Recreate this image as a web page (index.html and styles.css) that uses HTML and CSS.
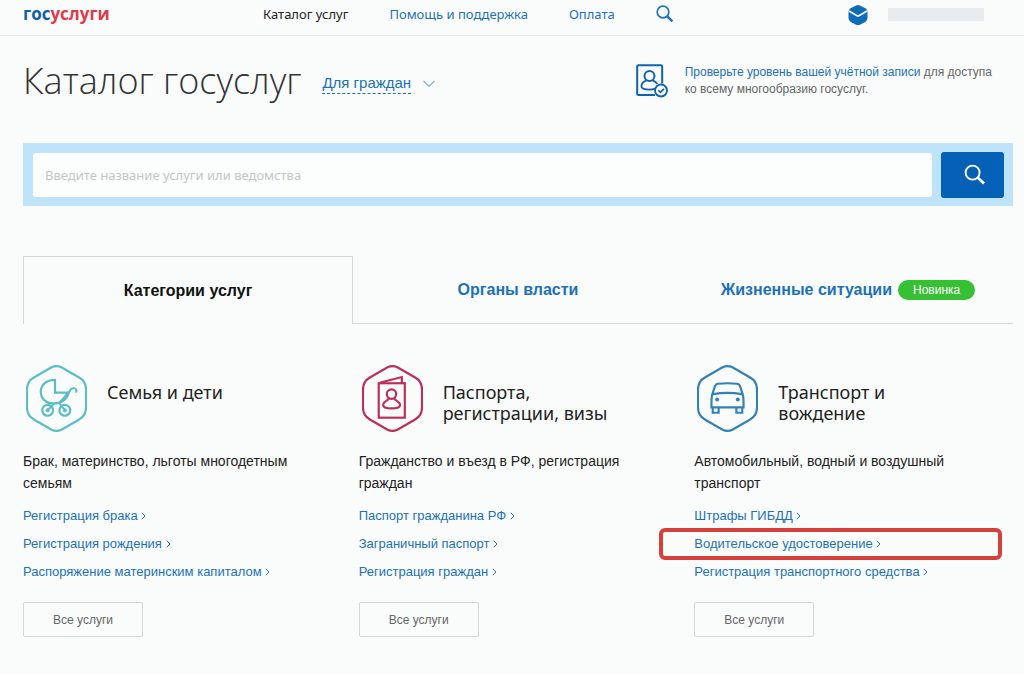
FILE: index.html
```
<!DOCTYPE html>
<html lang="ru">
<head>
<meta charset="utf-8">
<meta name="viewport" content="width=device-width, initial-scale=1">
<title>Каталог госуслуг</title>
<link rel="stylesheet" href="styles.css">
</head>
<body>
<header class="topbar">
  <a class="logo" href="#"><span class="logo-blue">гос</span>услуги</a>
  <nav class="nav">
    <a class="nav-link current" href="#">Каталог услуг</a>
    <a class="nav-link" href="#">Помощь и поддержка</a>
    <a class="nav-link" href="#">Оплата</a>
    <button class="icon-button" type="button" aria-label="Поиск">
      <svg width="18" height="18" viewBox="0 0 18 18" fill="none" stroke="#1c71b8"><circle cx="7" cy="7" r="5.8" stroke-width="1.7"/><path d="M11.3 11.3L16.4 16.4" stroke-width="2.4"/></svg>
    </button>
  </nav>
  <div class="account">
    <a href="#" class="mail" aria-label="Сообщения">
      <svg width="20" height="20" viewBox="0 0 20 20"><path d="M7.6 .7Q10-.5 12.4.7L17.3 3.2Q19.5 4.5 19.5 7V13Q19.5 15.5 17.3 16.9L12.4 19.4Q10 20.5 7.6 19.4L2.7 16.9Q.5 15.5.5 13V7Q.5 4.5 2.7 3.2Z" fill="#0f6cb8"/><path d="M1 6L8.6 10.5Q10 11.3 11.4 10.5L19 6" fill="none" stroke="#fafcfb" stroke-width="1.6"/></svg>
    </a>
    <span class="user-name"></span>
  </div>
</header>

<main class="page">
  <section class="heading">
    <h1 class="title">Каталог госуслуг</h1>
    <button class="audience" type="button">
      <span class="audience-text">Для граждан</span>
      <svg width="12" height="8" viewBox="0 0 12 8" fill="none" stroke="#7fb0d6" stroke-width="1.2"><path d="M.6 1L6 6.4L11.4 1"/></svg>
    </button>
    <div class="level">
      <svg width="32" height="34" viewBox="0 0 32 34" fill="none" stroke="#0f62ae" stroke-width="2"><path d="M19 31H2.4Q1.2 31 1.2 29.8V2.4Q1.2 1.2 2.4 1.2H25Q26.2 1.2 26.2 2.4V19.5"/><circle cx="13.5" cy="12" r="5"/><path d="M10.6 16.3C7.5 17.5 5.4 19.5 5.4 22C5.4 24.5 9.5 25.6 13.5 25.6C15.5 25.6 17.5 25.3 19 24.7M16.5 16.3C19 17.2 20.5 18.2 21.2 20" stroke-width="1.8"/><circle cx="25" cy="26.5" r="6" fill="#fafcfb" stroke-width="1.8"/><path d="M22.3 26.2L24.5 28.4L28 24.9" stroke-width="1.6"/></svg>
      <p class="level-text"><a href="#">Проверьте уровень вашей учётной записи</a> для доступа<br>ко всему многообразию госуслуг.</p>
    </div>
  </section>

  <form class="search">
    <input class="search-input" type="text" aria-label="Поиск услуги" placeholder="Введите название услуги или ведомства">
    <button class="search-button" type="button" aria-label="Найти">
      <svg width="22" height="22" viewBox="0 0 22 22" fill="none" stroke="#fff"><circle cx="8.6" cy="8.6" r="7" stroke-width="1.9"/><path d="M13.6 13.6L20 19.6" stroke-width="2.8"/></svg>
    </button>
  </form>

  <nav class="tabs">
    <a class="tab active" href="#">Категории услуг</a>
    <a class="tab" href="#">Органы власти</a>
    <a class="tab" href="#">Жизненные ситуации<span class="badge">Новинка</span></a>
  </nav>

  <div class="categories">
    <section class="category">
      <div class="category-head">
        <svg class="category-icon" width="61" height="67" viewBox="0 0 62 68" fill="none" stroke="#5bbdc6" stroke-width="2.2"><path d="M26 2.3Q31 0 36 2.3L54 12.6Q61 16.5 61 25V43Q61 51.5 54 55.4L36 65.7Q31 68 26 65.7L8 55.4Q1 51.5 1 43V25Q1 16.5 8 12.6Z"/><path d="M29.5 15V28H43.5C41.5 34.5 36.5 39 28 39C20 39 15 34 15 27C15 20 21 15 29.5 15Z"/><path d="M33.5 39L44.3 26.5C45.5 24.2 47 23.3 49 23.6C51.8 24 52 27.3 50 27.3"/><circle cx="22" cy="46" r="5.5"/><circle cx="39.5" cy="46" r="5.5"/><path d="M22 46L28.5 39.5M39.5 46L34 39" stroke-width="2"/><circle cx="22" cy="46" r="1" fill="#5bbdc6"/><circle cx="39.5" cy="46" r="1" fill="#5bbdc6"/></svg>
        <h2 class="category-title">Семья и дети</h2>
      </div>
      <p class="category-text">Брак, материнство, льготы многодетным семьям</p>
      <ul class="links">
        <li><a href="#">Регистрация брака <svg class="arrow" viewBox="0 0 5 8"><path d="M.8 .8L4 4L.8 7.2"/></svg></a></li>
        <li><a href="#">Регистрация рождения <svg class="arrow" viewBox="0 0 5 8"><path d="M.8 .8L4 4L.8 7.2"/></svg></a></li>
        <li><a href="#">Распоряжение материнским капиталом <svg class="arrow" viewBox="0 0 5 8"><path d="M.8 .8L4 4L.8 7.2"/></svg></a></li>
      </ul>
      <button class="all-button" type="button">Все услуги</button>
    </section>

    <section class="category">
      <div class="category-head">
        <svg class="category-icon" width="61" height="67" viewBox="0 0 62 68" fill="none" stroke="#bd2d58" stroke-width="2.2"><path d="M26 2.3Q31 0 36 2.3L54 12.6Q61 16.5 61 25V43Q61 51.5 54 55.4L36 65.7Q31 68 26 65.7L8 55.4Q1 51.5 1 43V25Q1 16.5 8 12.6Z"/><rect x="17" y="18.5" width="26.5" height="35"/><path d="M18 18L40.5 12.2V18.5"/><circle cx="30" cy="29.5" r="4.8"/><path d="M27.4 33.7C27 36.5 21.5 36.5 21.5 40.5C21.5 43 26 44 30 44C34 44 38.7 43 38.7 40.5C38.7 36.5 33 36.5 32.6 33.7"/></svg>
        <h2 class="category-title">Паспорта, регистрации, визы</h2>
      </div>
      <p class="category-text">Гражданство и въезд в РФ, регистрация граждан</p>
      <ul class="links">
        <li><a href="#">Паспорт гражданина РФ <svg class="arrow" viewBox="0 0 5 8"><path d="M.8 .8L4 4L.8 7.2"/></svg></a></li>
        <li><a href="#">Заграничный паспорт <svg class="arrow" viewBox="0 0 5 8"><path d="M.8 .8L4 4L.8 7.2"/></svg></a></li>
        <li><a href="#">Регистрация граждан <svg class="arrow" viewBox="0 0 5 8"><path d="M.8 .8L4 4L.8 7.2"/></svg></a></li>
      </ul>
      <button class="all-button" type="button">Все услуги</button>
    </section>

    <section class="category">
      <div class="category-head">
        <svg class="category-icon" width="61" height="67" viewBox="0 0 62 68" fill="none" stroke="#3381b5" stroke-width="2.2"><path d="M26 2.3Q31 0 36 2.3L54 12.6Q61 16.5 61 25V43Q61 51.5 54 55.4L36 65.7Q31 68 26 65.7L8 55.4Q1 51.5 1 43V25Q1 16.5 8 12.6Z"/><path d="M21 19Q31 18 41 19Q43 19.3 44 22L46.5 30Q47.5 33 47.3 43H14.7Q14.5 33 15.5 30L18 22Q19 19.3 21 19ZM16.5 29.5Q31 27 45.5 29.5M16 43V48.5H22V43M40 43V48.5H46V43"/><circle cx="20.5" cy="35" r="2" fill="#3381b5" stroke="none"/><circle cx="41.5" cy="35" r="2" fill="#3381b5" stroke="none"/></svg>
        <h2 class="category-title">Транспорт и вождение</h2>
      </div>
      <p class="category-text">Автомобильный, водный и воздушный транспорт</p>
      <ul class="links">
        <li><a href="#">Штрафы ГИБДД <svg class="arrow" viewBox="0 0 5 8"><path d="M.8 .8L4 4L.8 7.2"/></svg></a></li>
        <li class="marked"><a href="#">Водительское удостоверение <svg class="arrow" viewBox="0 0 5 8"><path d="M.8 .8L4 4L.8 7.2"/></svg></a></li>
        <li><a href="#">Регистрация транспортного средства <svg class="arrow" viewBox="0 0 5 8"><path d="M.8 .8L4 4L.8 7.2"/></svg></a></li>
      </ul>
      <button class="all-button" type="button">Все услуги</button>
    </section>
  </div>
</main>
</body>
</html>
```

FILE: styles.css
```
* {
  box-sizing: border-box;
}

body {
  margin: 0;
  background: #fafcfb;
  color: #222;
  font: 14px/22px "Liberation Sans", Arial, sans-serif;
}

a {
  color: #1c71b8;
  text-decoration: none;
}

h1, h2, p, ul {
  margin: 0;
  padding: 0;
}

button {
  padding: 0;
  border: 0;
  background: none;
  font: inherit;
  cursor: pointer;
}

svg {
  display: block;
  flex: none;
}

.topbar {
  display: flex;
  align-items: center;
  height: 36px;
  padding: 0 40px 8px 23px;
  border-bottom: 1px solid #e6eaea;
}

.logo {
  width: 240px;
  color: #e0394c;
  font: bold 17px/24px "Open Sans", sans-serif;
}

.logo-blue {
  color: #0f5fae;
}

.nav {
  display: flex;
  align-items: center;
  gap: 41px;
}

.nav-link {
  font: 13px/20px "Noto Sans", sans-serif;
}

.nav-link.current {
  color: #222;
}

.account {
  display: flex;
  align-items: center;
  gap: 20px;
  margin-left: auto;
  padding-top: 2px;
}

.user-name {
  width: 96px;
  height: 13px;
  background: #e9ecee;
}

.page {
  padding: 0 11px 37px 23px;
}

.heading {
  display: flex;
  align-items: center;
  height: 107px;
  padding-bottom: 18px;
}

.title {
  color: #333;
  font: 300 36px/44px "Open Sans", sans-serif;
}

.audience {
  display: flex;
  align-items: center;
  gap: 12px;
  margin-left: 21px;
  padding-top: 6px;
  color: #1c71b8;
  font-size: 15px;
  line-height: 20px;
}

.audience-text {
  border-bottom: 1px dashed #1c71b8;
}

.level {
  display: flex;
  align-items: center;
  gap: 17px;
  margin-left: auto;
  padding-right: 21px;
}

.level-text {
  color: #666;
  font-size: 12px;
  line-height: 17px;
}

.search {
  display: flex;
  align-items: center;
  gap: 9px;
  height: 63px;
  padding: 9px 9px 9px 10px;
  background: #bfe3f9;
}

.search-input {
  flex: 1;
  min-width: 0;
  height: 44px;
  padding: 0 12px;
  border: 0;
  border-radius: 3px;
  background: #fcfefd;
  font: 13px/20px "Noto Sans", sans-serif;
}

.search-input::placeholder {
  color: #c4c6c6;
}

.search-button {
  display: flex;
  align-items: center;
  justify-content: center;
  width: 63px;
  height: 46px;
  padding-left: 4px;
  border-radius: 3px;
  background: #0561b5;
}

.tabs {
  display: grid;
  grid-template-columns: repeat(3, 1fr);
  margin-top: 50px;
}

.tab {
  display: flex;
  align-items: center;
  justify-content: center;
  height: 68px;
  border-bottom: 1px solid #d3d7d7;
  font-size: 16px;
  font-weight: bold;
}

.tab.active {
  border: 1px solid #d3d7d7;
  border-bottom: 0;
  color: #111;
}

.badge {
  margin-left: 6px;
  padding: 0 15px;
  border-radius: 10px;
  background: #37c034;
  color: #fff;
  font-size: 12px;
  font-weight: normal;
  line-height: 20px;
}

.categories {
  display: grid;
  grid-template-columns: repeat(3, 1fr);
  gap: 17px;
  margin-top: 41px;
}

.category-head {
  display: flex;
  align-items: flex-start;
  gap: 20px;
  padding-left: 3px;
  height: 68px;
}

.category-title {
  max-width: 180px;
  padding-top: 17px;
  color: #222;
  font: 18px/21px "Noto Sans", sans-serif;
}

.category-text {
  max-width: 290px;
  margin-top: 17px;
}

.links {
  margin-top: 8px;
  list-style: none;
  font-size: 13px;
}

.links li {
  padding: 3px 0;
  line-height: 22px;
}

.arrow {
  display: inline-block;
  width: 5px;
  height: 8px;
  fill: none;
  stroke: #1c71b8;
  stroke-width: 1;
}

.links .marked {
  margin: -2px 11px -2px -35px;
  padding: 1px 0 1px 31px;
  border: 4px solid #d5403d;
  border-radius: 6px;
}

.all-button {
  width: 120px;
  height: 35px;
  margin-top: 16px;
  border: 1px solid #d3d7d5;
  border-radius: 2px;
  color: #666;
  font-size: 12px;
}
```
